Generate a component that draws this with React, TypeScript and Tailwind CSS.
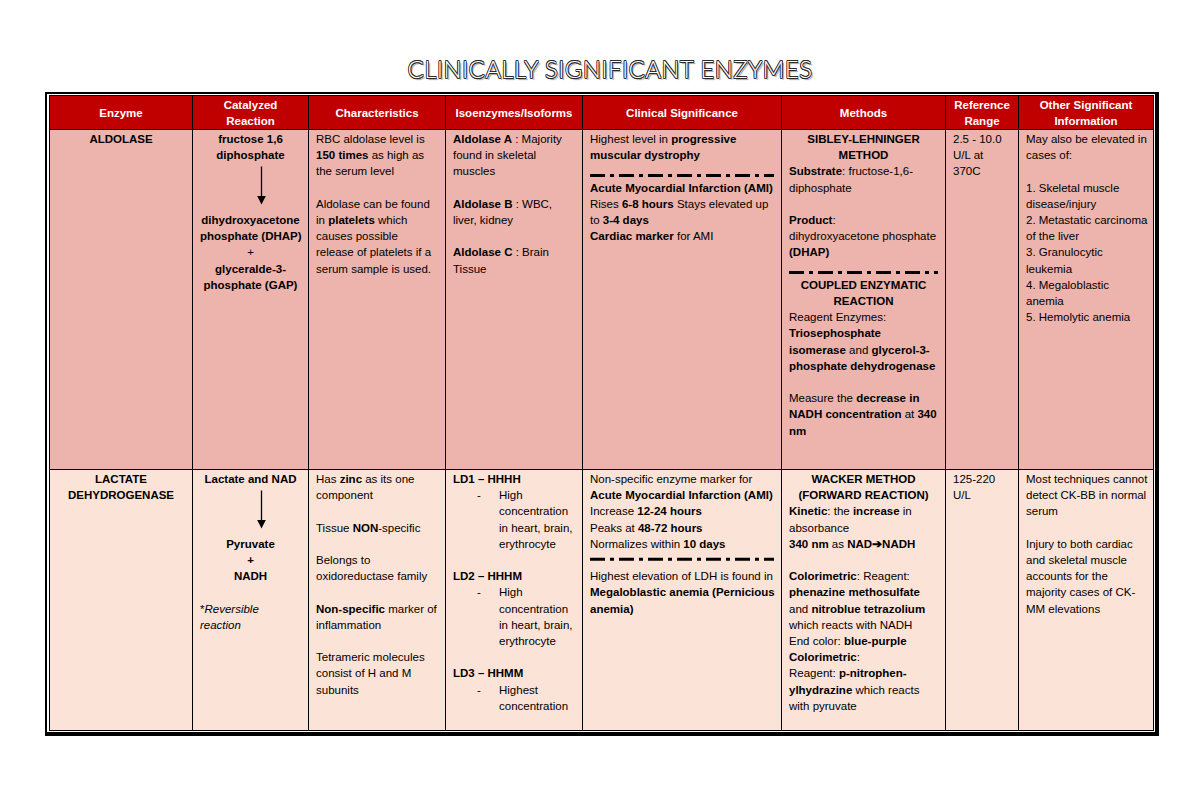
import React from 'react';

const R1 = 'bg-[#ecb4ac]';
const R2 = 'bg-[#fce3d7]';

const Blank = () => <div className="h-[16.2px]" />;

const DashRule = ({ y }: { y: number }) => (
  <svg className="block w-full h-[16.2px]">
    <line x1="0" x2="100%" y1={y} y2={y} stroke="#000" strokeWidth="3" strokeDasharray="15 5 4 5" />
  </svg>
);

const DownArrow = () => (
  <svg width="101" height="48.6" className="block">
    <line x1="61.5" y1="3.5" x2="61.5" y2="34" stroke="#000" strokeWidth="1.3" />
    <polygon points="57.2,33 65.8,33 61.5,41.5" fill="#000" />
  </svg>
);

const Head = ({ children }: { children: React.ReactNode }) => (
  <div className="bg-[#c00000] text-white font-bold flex items-center justify-center text-center leading-[16px] whitespace-nowrap">
    {children}
  </div>
);

const Cell = ({ bg, children }: { bg: string; children?: React.ReactNode }) => (
  <div className={`${bg} px-[7px] pt-[1px] leading-[16.2px] whitespace-nowrap`}>{children}</div>
);

const Dashed = ({ children }: { children: React.ReactNode }) => (
  <div className="flex">
    <span className="w-[46px] shrink-0 pl-[24px]">-</span>
    <div>{children}</div>
  </div>
);

export default function App() {
  return (
    <div className="w-[1200px] min-h-[785px] bg-white text-black font-['Liberation_Sans',Arial,sans-serif] text-[11.5px]">
      <div className="h-[92px] pt-[55px] pl-[20px] text-center">
        <h1 className="font-['Lato',sans-serif] text-[24px] leading-[28px] font-light tracking-[0.4px] text-white [text-shadow:-0.6px_-0.6px_0_#2a2a2a,0.6px_-0.6px_0_#2a2a2a,-0.6px_0.6px_0_#2a2a2a,0.6px_0.6px_0_#2a2a2a,0_-0.8px_0_#2a2a2a,0_0.8px_0_#2a2a2a,-0.8px_0_0_#2a2a2a,0.8px_0_0_#2a2a2a,2px_2px_1px_#9a9a9a]">
          CLINICALLY SIGNIFICANT ENZYMES
        </h1>
      </div>

      <div className="ml-[45px] w-fit bg-white border-black border-t-2 border-l-2 border-r-4 border-b-4 pt-px pl-[2px] pr-px pb-px">
        <div className="grid grid-cols-[142px_115px_136px_136px_198px_163px_72px_134px] grid-rows-[33px_339px_260px] gap-px bg-black border border-black">
          <Head>Enzyme</Head>
          <Head>Catalyzed<br />Reaction</Head>
          <Head>Characteristics</Head>
          <Head>Isoenzymes/Isoforms</Head>
          <Head>Clinical Significance</Head>
          <Head>Methods</Head>
          <Head>Reference<br />Range</Head>
          <Head>Other Significant<br />Information</Head>

          {/* ALDOLASE */}
          <Cell bg={R1}>
            <div className="text-center font-bold">ALDOLASE</div>
          </Cell>
          <Cell bg={R1}>
            <div className="text-center font-bold">fructose 1,6<br />diphosphate</div>
            <DownArrow />
            <div className="text-center font-bold">
              dihydroxyacetone<br />phosphate (DHAP)<br /><span className="font-normal">+</span><br />glyceralde-3-<br />phosphate (GAP)
            </div>
          </Cell>
          <Cell bg={R1}>
            RBC aldolase level is<br />
            <b>150 times</b> as high as<br />
            the serum level
            <Blank />
            Aldolase can be found<br />
            in <b>platelets</b> which<br />
            causes possible<br />
            release of platelets if a<br />
            serum sample is used.
          </Cell>
          <Cell bg={R1}>
            <b>Aldolase A</b> : Majority<br />
            found in skeletal<br />
            muscles
            <Blank />
            <b>Aldolase B</b> : WBC,<br />
            liver, kidney
            <Blank />
            <b>Aldolase C</b> : Brain<br />
            Tissue
          </Cell>
          <Cell bg={R1}>
            Highest level in <b>progressive</b><br />
            <b>muscular dystrophy</b>
            <DashRule y={12.6} />
            <b>Acute Myocardial Infarction (AMI)</b><br />
            Rises <b>6-8 hours</b> Stays elevated up<br />
            to <b>3-4 days</b><br />
            <b>Cardiac marker</b> for AMI
          </Cell>
          <Cell bg={R1}>
            <div className="text-center font-bold">SIBLEY-LEHNINGER<br />METHOD</div>
            <b>Substrate</b>: fructose-1,6-<br />
            diphosphate
            <Blank />
            <b>Product</b>:<br />
            dihydroxyacetone phosphate<br />
            <b>(DHAP)</b>
            <DashRule y={11.4} />
            <div className="text-center font-bold">COUPLED ENZYMATIC<br />REACTION</div>
            Reagent Enzymes:<br />
            <b>Triosephosphate</b><br />
            <b>isomerase</b> and <b>glycerol-3-</b><br />
            <b>phosphate dehydrogenase</b>
            <Blank />
            Measure the <b>decrease in</b><br />
            <b>NADH concentration</b> at <b>340</b><br />
            <b>nm</b>
          </Cell>
          <Cell bg={R1}>
            2.5 - 10.0<br />U/L at<br />370C
          </Cell>
          <Cell bg={R1}>
            May also be elevated in<br />
            cases of:
            <Blank />
            1. Skeletal muscle<br />
            disease/injury<br />
            2. Metastatic carcinoma<br />
            of the liver<br />
            3. Granulocytic<br />
            leukemia<br />
            4. Megaloblastic<br />
            anemia<br />
            5. Hemolytic anemia
          </Cell>

          {/* LACTATE DEHYDROGENASE */}
          <Cell bg={R2}>
            <div className="text-center font-bold">LACTATE<br />DEHYDROGENASE</div>
          </Cell>
          <Cell bg={R2}>
            <div className="text-center font-bold">Lactate and NAD</div>
            <DownArrow />
            <div className="text-center font-bold">Pyruvate<br />+<br />NADH</div>
            <Blank />
            *<i>Reversible</i><br />
            <i>reaction</i>
          </Cell>
          <Cell bg={R2}>
            Has <b>zinc</b> as its one<br />
            component
            <Blank />
            Tissue <b>NON</b>-specific
            <Blank />
            Belongs to<br />
            oxidoreductase family
            <Blank />
            <b>Non-specific</b> marker of<br />
            inflammation
            <Blank />
            Tetrameric molecules<br />
            consist of H and M<br />
            subunits
          </Cell>
          <Cell bg={R2}>
            <b>LD1 – HHHH</b>
            <Dashed>High<br />concentration<br />in heart, brain,<br />erythrocyte</Dashed>
            <Blank />
            <b>LD2 – HHHM</b>
            <Dashed>High<br />concentration<br />in heart, brain,<br />erythrocyte</Dashed>
            <Blank />
            <b>LD3 – HHMM</b>
            <Dashed>Highest<br />concentration</Dashed>
          </Cell>
          <Cell bg={R2}>
            Non-specific enzyme marker for<br />
            <b>Acute Myocardial Infarction (AMI)</b><br />
            Increase <b>12-24 hours</b><br />
            Peaks at <b>48-72 hours</b><br />
            Normalizes within <b>10 days</b>
            <DashRule y={7.3} />
            Highest elevation of LDH is found in<br />
            <b>Megaloblastic anemia (Pernicious</b><br />
            <b>anemia)</b>
          </Cell>
          <Cell bg={R2}>
            <div className="text-center font-bold">WACKER METHOD<br />(FORWARD REACTION)</div>
            <b>Kinetic</b>: the <b>increase</b> in<br />
            absorbance<br />
            <b>340 nm</b> as <b>NAD➔NADH</b>
            <Blank />
            <b>Colorimetric</b>: Reagent:<br />
            <b>phenazine methosulfate</b><br />
            and <b>nitroblue tetrazolium</b><br />
            which reacts with NADH<br />
            End color: <b>blue-purple</b><br />
            <b>Colorimetric</b>:<br />
            Reagent: <b>p-nitrophen-</b><br />
            <b>ylhydrazine</b> which reacts<br />
            with pyruvate
          </Cell>
          <Cell bg={R2}>
            125-220<br />U/L
          </Cell>
          <Cell bg={R2}>
            Most techniques cannot<br />
            detect CK-BB in normal<br />
            serum
            <Blank />
            Injury to both cardiac<br />
            and skeletal muscle<br />
            accounts for the<br />
            majority cases of CK-<br />
            MM elevations
          </Cell>
        </div>
      </div>
    </div>
  );
}
